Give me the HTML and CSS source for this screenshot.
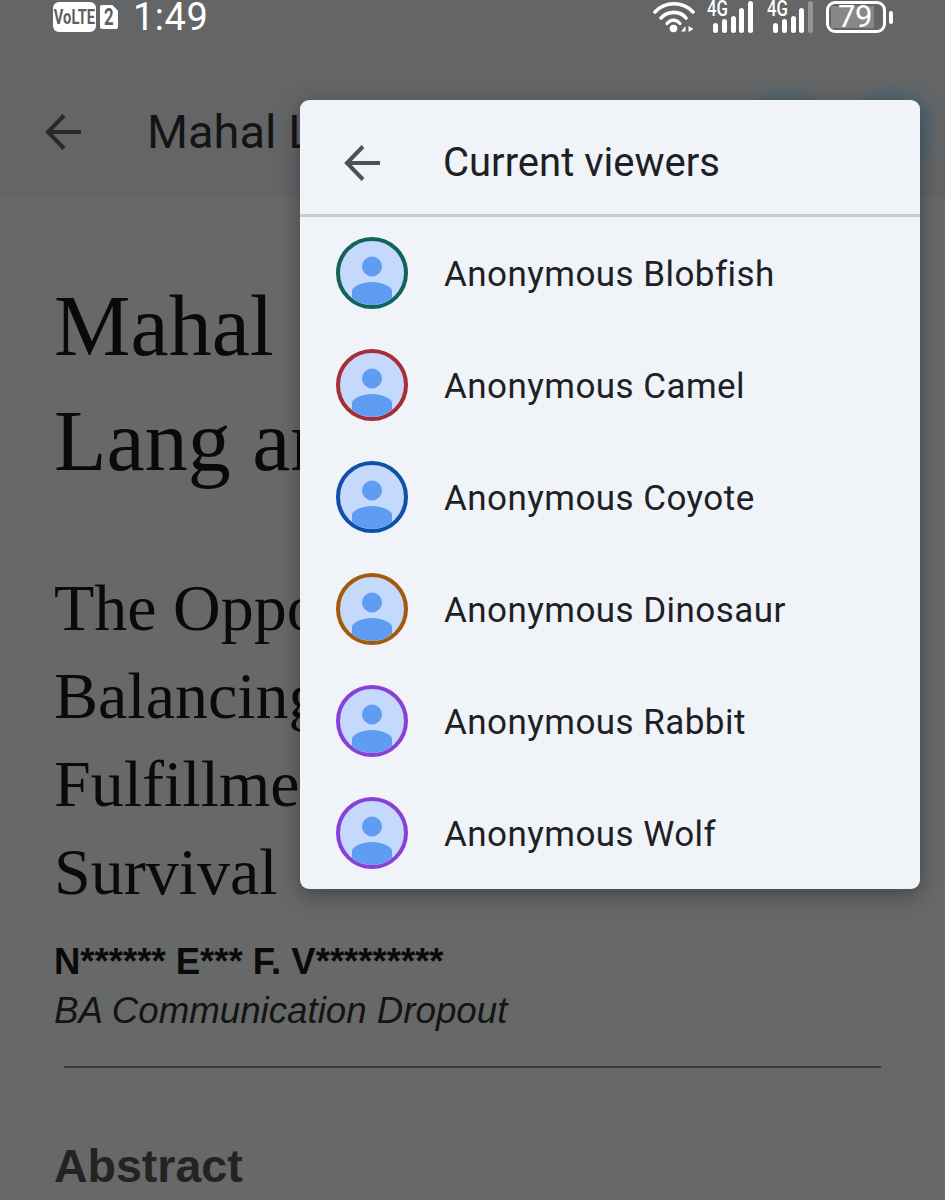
FILE: index.html
```html
<!DOCTYPE html>
<html lang="en">
<head>
<meta charset="utf-8">
<title>Current viewers</title>
<link rel="stylesheet" href="styles.css">
</head>
<body>
<div class="screen">
  <div class="status">
    <div class="status-left">
      <span class="volte"><span class="squeeze">VoLTE</span></span>
      <span class="sim"><span class="squeeze">2</span></span>
      <span class="time">1:49</span>
    </div>
    <div class="status-right">
      <svg class="wifi" width="42" height="32" viewBox="0 0 42 32" fill="none" stroke="#fff" stroke-linecap="round">
        <path d="M2 11C12 0 30 0 40 11" stroke-width="3.6"/>
        <path d="M8 17C15 9.500 27 9.500 33 17" stroke-width="3.6"/>
        <path d="M14 22.500C18 18 23 18 27 22.500" stroke-width="3.200"/>
        <circle cx="20.500" cy="27.500" r="3.800" fill="#fff" stroke="none"/>
        <path d="M32.500 25L28 30.500H32.500ZM35.500 25L40.500 28L35.500 31Z" fill="#fff" stroke="none"/>
      </svg>
      <div class="signal">
        <span class="net">4G</span>
        <svg width="47" height="32" viewBox="0 0 47 32" fill="#fff">
          <rect x="7" y="22" width="5" height="10" rx="2.500"/>
          <rect x="16" y="18" width="5" height="14" rx="2.500"/>
          <rect x="25" y="15" width="5" height="17" rx="2.500"/>
          <rect x="33" y="7" width="5" height="25" rx="2.500"/>
          <rect x="42" y="0" width="5" height="32" rx="2.500"/>
        </svg>
      </div>
      <div class="signal">
        <span class="net">4G</span>
        <svg width="47" height="32" viewBox="0 0 47 32" fill="#fff">
          <rect x="7" y="22" width="5" height="10" rx="2.500"/>
          <rect x="16" y="18" width="5" height="14" rx="2.500"/>
          <rect x="25" y="15" width="5" height="17" rx="2.500"/>
          <rect x="33" y="7" width="5" height="25" rx="2.500"/>
          <rect x="42" y="0" width="5" height="32" rx="2.500" fill="#949596"/>
        </svg>
      </div>
      <div class="battery">
        <div class="cell"><span class="level">79</span></div>
        <span class="nub"></span>
      </div>
    </div>
  </div>

  <header class="appbar">
    <svg class="back" width="36" height="36" viewBox="0 0 36 36" fill="none" stroke="#272829" stroke-width="4">
      <path d="M36 18H4M19 1.500L3 18L19 34.500"/>
    </svg>
    <div class="appbar-title">Mahal Lang</div>
    <div class="appbar-dots">
      <span class="dot"></span>
      <span class="dot"></span>
    </div>
  </header>

  <main class="doc">
    <h1 class="doc-title">Mahal<br>Lang and</h1>
    <h2 class="doc-sub">The Opposing<br>Balancing<br>Fulfillment<br>Survival</h2>
    <p class="author">N****** E*** F. V*********</p>
    <p class="role">BA Communication Dropout</p>
    <hr class="rule">
    <h3 class="abstract">Abstract</h3>
  </main>

  <section class="panel">
    <div class="panel-head">
      <svg class="back" width="36" height="36" viewBox="0 0 36 36" fill="none" stroke="#4f5155" stroke-width="4">
        <path d="M36 18H4M19 1.500L3 18L19 34.500"/>
      </svg>
      <span class="panel-title">Current viewers</span>
    </div>
    <ul class="viewers">
      <li class="viewer">
        <svg class="avatar" width="72" height="72" viewBox="0 0 72 72"><circle cx="36" cy="36" r="34" fill="#c4d9fb" stroke="#12635c" stroke-width="4"/><circle cx="36" cy="29.500" r="10" fill="#5f9df3"/><path d="M16 61V54C16 49 27 45 36 45S56 49 56 54V61A32 32 0 0 1 16 61Z" fill="#5f9df3"/></svg>
        <span class="name">Anonymous Blobfish</span>
      </li>
      <li class="viewer">
        <svg class="avatar" width="72" height="72" viewBox="0 0 72 72"><circle cx="36" cy="36" r="34" fill="#c4d9fb" stroke="#a52f34" stroke-width="4"/><circle cx="36" cy="29.500" r="10" fill="#5f9df3"/><path d="M16 61V54C16 49 27 45 36 45S56 49 56 54V61A32 32 0 0 1 16 61Z" fill="#5f9df3"/></svg>
        <span class="name">Anonymous Camel</span>
      </li>
      <li class="viewer">
        <svg class="avatar" width="72" height="72" viewBox="0 0 72 72"><circle cx="36" cy="36" r="34" fill="#c4d9fb" stroke="#0f50a8" stroke-width="4"/><circle cx="36" cy="29.500" r="10" fill="#5f9df3"/><path d="M16 61V54C16 49 27 45 36 45S56 49 56 54V61A32 32 0 0 1 16 61Z" fill="#5f9df3"/></svg>
        <span class="name">Anonymous Coyote</span>
      </li>
      <li class="viewer">
        <svg class="avatar" width="72" height="72" viewBox="0 0 72 72"><circle cx="36" cy="36" r="34" fill="#c4d9fb" stroke="#a35a0c" stroke-width="4"/><circle cx="36" cy="29.500" r="10" fill="#5f9df3"/><path d="M16 61V54C16 49 27 45 36 45S56 49 56 54V61A32 32 0 0 1 16 61Z" fill="#5f9df3"/></svg>
        <span class="name">Anonymous Dinosaur</span>
      </li>
      <li class="viewer">
        <svg class="avatar" width="72" height="72" viewBox="0 0 72 72"><circle cx="36" cy="36" r="34" fill="#c4d9fb" stroke="#8a3fd6" stroke-width="4"/><circle cx="36" cy="29.500" r="10" fill="#5f9df3"/><path d="M16 61V54C16 49 27 45 36 45S56 49 56 54V61A32 32 0 0 1 16 61Z" fill="#5f9df3"/></svg>
        <span class="name">Anonymous Rabbit</span>
      </li>
      <li class="viewer">
        <svg class="avatar" width="72" height="72" viewBox="0 0 72 72"><circle cx="36" cy="36" r="34" fill="#c4d9fb" stroke="#8a3fd6" stroke-width="4"/><circle cx="36" cy="29.500" r="10" fill="#5f9df3"/><path d="M16 61V54C16 49 27 45 36 45S56 49 56 54V61A32 32 0 0 1 16 61Z" fill="#5f9df3"/></svg>
        <span class="name">Anonymous Wolf</span>
      </li>
    </ul>
  </section>
</div>
</body>
</html>
```

FILE: styles.css
```css
* { box-sizing: border-box; }
html, body { margin: 0; padding: 0; }
body {
  background: #676868;
  font-family: Roboto, "Liberation Sans", sans-serif;
}
.screen {
  position: relative;
  width: 945px;
  height: 1200px;
  overflow: hidden;
  background: #676868;
}

/* status bar */
.status {
  display: flex;
  justify-content: space-between;
  align-items: flex-start;
  height: 34px;
  padding: 1px 52px 0 53px;
  background: #646566;
}
.status-left { display: flex; align-items: center; height: 32px; }
.volte {
  display: flex;
  align-items: center;
  justify-content: center;
  width: 43px;
  height: 30px;
  border-radius: 6px;
  background: #fff;
  color: #5e5f60;
  font-size: 21px;
  font-weight: 700;
  line-height: 24px;
}
.squeeze { display: inline-block; transform: scaleX(0.7); }
.sim {
  display: flex;
  align-items: center;
  justify-content: center;
  width: 18px;
  height: 24px;
  margin-left: 4px;
  background: #fff;
  color: #5e5f60;
  font-size: 24px;
  font-weight: 700;
  line-height: 24px;
  border-radius: 2px;
  clip-path: polygon(0 0, 68% 0, 100% 24%, 100% 100%, 0 100%);
}
.time {
  margin-left: 15px;
  color: #fff;
  font-size: 38px;
  font-weight: 400;
  line-height: 32px;
  letter-spacing: 0.5px;
}
.status-right { display: flex; align-items: flex-start; }
.wifi { margin-right: 11px; }
.signal { position: relative; width: 47px; height: 32px; margin-right: 13px; }
.net {
  position: absolute;
  left: 1px;
  top: 0;
  color: #fff;
  font-size: 22px;
  font-weight: 500;
  line-height: 15px;
  transform: scaleX(0.76);
  transform-origin: 0 50%;
}
.battery { display: flex; align-items: center; gap: 3px; }
.cell {
  width: 60px;
  height: 32px;
  padding: 2px;
  border: 3px solid #fff;
  border-radius: 9px;
  overflow: hidden;
}
.level {
  display: block;
  width: 43px;
  height: 100%;
  background: #878889;
  color: #fff;
  font-size: 31px;
  font-weight: 400;
  line-height: 22px;
  letter-spacing: -0.5px;
  text-align: center;
  padding-left: 5px;
}
.nub { width: 4px; height: 13px; border-radius: 2px; background: #fff; }

/* app bar */
.appbar {
  position: relative;
  display: flex;
  align-items: center;
  height: 163px;
  padding-left: 45px;
  padding-top: 33px;
  background: #646566;
  border-bottom: 1px solid #636465;
}
.appbar-title {
  margin-left: 66px;
  color: #131415;
  font-size: 47px;
  white-space: nowrap;
}
.appbar-dots {
  position: absolute;
  right: 9px;
  top: 53px;
  display: flex;
  gap: 22px;
}
.dot { width: 86px; height: 86px; border-radius: 50%; background: #58666f; }

/* document behind */
.doc { padding: 0 0 0 54px; }
.doc-title {
  margin: 72px 0 0;
  color: #0a0a0a;
  font-family: "Liberation Serif", serif;
  font-size: 86px;
  font-weight: 400;
  line-height: 115px;
  white-space: nowrap;
}
.doc-sub {
  margin: 65px 0 0;
  color: #0a0a0a;
  font-family: "Liberation Serif", serif;
  font-size: 66px;
  font-weight: 400;
  line-height: 88px;
  white-space: nowrap;
}
.author {
  margin: 24px 0 0;
  color: #0a0a0a;
  font-family: "Liberation Sans", sans-serif;
  font-size: 36.5px;
  font-weight: 700;
  line-height: 44px;
}
.role {
  margin: 5px 0 0;
  color: #141414;
  font-family: "Liberation Sans", sans-serif;
  font-size: 36.7px;
  font-style: italic;
  line-height: 44px;
}
.rule {
  width: 817px;
  height: 2px;
  margin: 33px 0 0 10px;
  border: 0;
  background: #3c3c3d;
}
.abstract {
  margin: 72px 0 0;
  color: #232324;
  font-family: "Liberation Sans", sans-serif;
  font-size: 46.5px;
  font-weight: 700;
  line-height: 52px;
}

/* viewers popup */
.panel {
  position: absolute;
  left: 300px;
  top: 100px;
  width: 620px;
  height: 789px;
  border-radius: 9px;
  background: #f0f3f8;
  box-shadow: 0 6px 22px rgba(0, 0, 0, 0.35);
  overflow: hidden;
}
.panel-head {
  display: flex;
  align-items: center;
  height: 117px;
  padding: 12px 0 0 44px;
  border-bottom: 3px solid #cbccce;
}
.panel-title {
  margin-left: 63px;
  color: #1d2025;
  font-size: 40px;
  line-height: 48px;
}
.viewers { margin: 0; padding: 0; list-style: none; }
.viewer {
  display: flex;
  align-items: center;
  height: 112px;
  padding-left: 36px;
}
.avatar { flex: none; }
.name {
  margin-left: 36px;
  padding-top: 2px;
  color: #1d2025;
  font-size: 35px;
  letter-spacing: 0.45px;
}
```
